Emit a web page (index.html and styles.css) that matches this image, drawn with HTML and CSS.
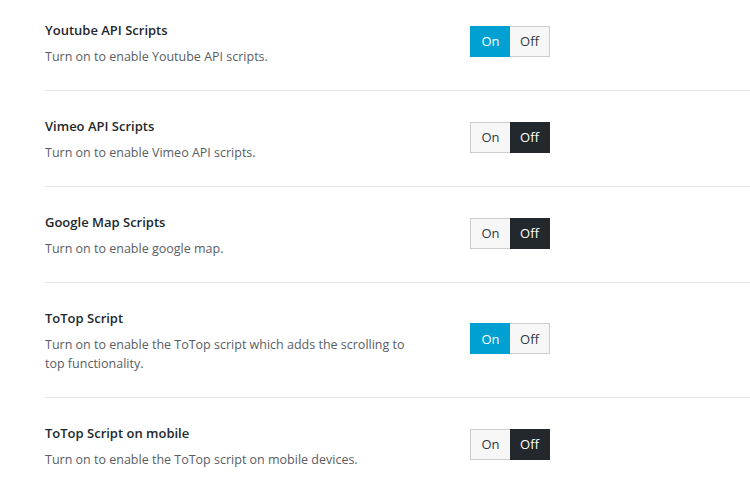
FILE: index.html
```html
<!DOCTYPE html>
<html>
<head>
<meta charset="utf-8">
<link rel="stylesheet" href="styles.css">
</head>
<body>
<div class="settings">
  <div class="row">
    <div class="text">
      <div class="title">Youtube API Scripts</div>
      <div class="desc">Turn on to enable Youtube API scripts.</div>
    </div>
    <div class="toggle"><span class="opt on-active">On</span><span class="opt">Off</span></div>
  </div>
  <div class="row">
    <div class="text">
      <div class="title">Vimeo API Scripts</div>
      <div class="desc">Turn on to enable Vimeo API scripts.</div>
    </div>
    <div class="toggle"><span class="opt">On</span><span class="opt off-active">Off</span></div>
  </div>
  <div class="row">
    <div class="text">
      <div class="title">Google Map Scripts</div>
      <div class="desc">Turn on to enable google map.</div>
    </div>
    <div class="toggle"><span class="opt">On</span><span class="opt off-active">Off</span></div>
  </div>
  <div class="row">
    <div class="text">
      <div class="title">ToTop Script</div>
      <div class="desc">Turn on to enable the ToTop script which adds the scrolling to top functionality.</div>
    </div>
    <div class="toggle"><span class="opt on-active">On</span><span class="opt">Off</span></div>
  </div>
  <div class="row">
    <div class="text">
      <div class="title">ToTop Script on mobile</div>
      <div class="desc">Turn on to enable the ToTop script on mobile devices.</div>
    </div>
    <div class="toggle"><span class="opt">On</span><span class="opt off-active">Off</span></div>
  </div>
</div>
</body>
</html>
```
FILE: styles.css
```css
html, body {
  margin: 0;
  padding: 0;
  background: #fff;
}
body {
  font-family: "Open Sans", "Noto Sans", sans-serif;
  color: #23282d;
  overflow: hidden;
}
.settings {
  padding-left: 45px;
}
.row {
  display: grid;
  grid-template-columns: 425px auto;
  align-items: center;
  padding: 25px 0 24px;
  border-bottom: 1px solid #e2e4e7;
}
.row:first-child {
  padding-top: 20px;
}
.text {
  max-width: 375px;
}
.title {
  font-size: 13px;
  font-weight: 600;
  line-height: 20px;
  color: #23282d;
  margin-bottom: 7px;
}
.desc {
  font-size: 12.5px;
  line-height: 19px;
  color: #5a5d64;
}
.toggle {
  display: flex;
  width: 80px;
  height: 31px;
  margin-bottom: 4px;
}
.opt {
  flex: 1;
  display: flex;
  align-items: center;
  justify-content: center;
  font-size: 13px;
  color: #32373c;
  background: #f7f7f7;
  border: 1px solid #ccc;
  box-sizing: border-box;
}
.opt:first-child {
  border-right: none;
}
.opt:last-child {
  border-left: none;
}
.on-active {
  background: #00a0d2;
  border-color: #00a0d2;
  color: #fff;
}
.off-active {
  background: #23282d;
  border-color: #23282d;
  color: #fff;
}
```
